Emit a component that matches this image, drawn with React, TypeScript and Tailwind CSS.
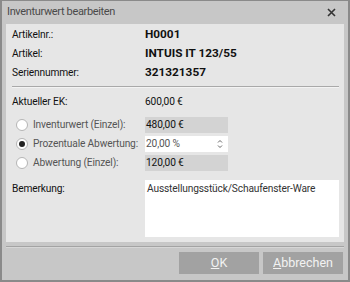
import React from "react";

const font = { fontFamily: 'Roboto, "Noto Sans", sans-serif' };

function Radio({ checked }: { checked?: boolean }) {
  return (
    <div className="w-[12px] h-[12px] shrink-0 rounded-full bg-white border border-[#b5b5b5] flex items-center justify-center">
      {checked && <div className="w-[6px] h-[6px] rounded-full bg-[#222]" />}
    </div>
  );
}

export default function App() {
  return (
    <div
      className="w-[350px] h-[282px] bg-[#c7c7c7] border-x-2 border-b-2 border-t border-[#8a8a8a] flex flex-col text-[10.2px] tracking-[-0.15px] text-[#111] overflow-hidden whitespace-nowrap"
      style={font}
    >
      <div className="h-[23px] flex items-center justify-between pl-[5px] pr-[12px] shrink-0">
        <span className="text-[11px] tracking-[-0.35px] text-[#4a4a4a]">Inventurwert bearbeiten</span>
        <svg width="9" height="9" viewBox="0 0 9 9">
          <path d="M1 1 L8 8 M8 1 L1 8" stroke="#333" strokeWidth="1.6" />
        </svg>
      </div>
      <div className="mx-[4px] bg-[#e6e6e6] h-[218px] pl-[6px] pr-[5px] pt-[1px] shrink-0">
        <div className="flex items-center h-[19px]">
          <span className="w-[133px]">Artikelnr.:</span>
          <span className="font-bold text-[11.8px] tracking-normal">H0001</span>
        </div>
        <div className="flex items-center h-[19px]">
          <span className="w-[133px]">Artikel:</span>
          <span className="font-bold text-[11.8px] tracking-normal">INTUIS IT 123/55</span>
        </div>
        <div className="flex items-center h-[19px]">
          <span className="w-[133px]">Seriennummer:</span>
          <span className="font-bold text-[11.8px] tracking-normal">321321357</span>
        </div>
        <div className="mt-[4px] h-[1px] bg-[#a9a9a9] border-b border-[#f3f3f3] box-content" />
        <div className="flex items-center h-[19px] mt-[4px]">
          <span className="w-[133px]">Aktueller EK:</span>
          <span>600,00 €</span>
        </div>
        <div className="mt-[6px] flex flex-col gap-[3px]">
          <div className="flex items-center h-[16px]">
            <div className="w-[133px] flex items-center pl-[4px] gap-[5px] text-[#555]">
              <Radio />
              <span>Inventurwert (Einzel):</span>
            </div>
            <div className="w-[83px] h-[16px] bg-[#d3d3d3] flex items-center pl-[1px]">480,00 €</div>
          </div>
          <div className="flex items-center h-[16px]">
            <div className="w-[133px] flex items-center pl-[4px] gap-[5px] text-[#555]">
              <Radio checked />
              <span>Prozentuale Abwertung:</span>
            </div>
            <div className="w-[83px] h-[16px] bg-white flex items-center justify-between pl-[1px] pr-[5px] text-[#555]">
              <span>20,00 %</span>
              <svg width="6" height="10" viewBox="0 0 6 10">
                <path d="M1 3.5 L3 1.5 L5 3.5 M1 6.5 L3 8.5 L5 6.5" stroke="#666" strokeWidth="1" fill="none" />
              </svg>
            </div>
          </div>
          <div className="flex items-center h-[16px]">
            <div className="w-[133px] flex items-center pl-[4px] gap-[5px] text-[#555]">
              <Radio />
              <span>Abwertung (Einzel):</span>
            </div>
            <div className="w-[83px] h-[16px] bg-[#d3d3d3] flex items-center pl-[1px]">120,00 €</div>
          </div>
        </div>
        <div className="flex mt-[9px]">
          <span className="w-[133px] pt-[1px]">Bemerkung:</span>
          <div className="flex-1 h-[57px] bg-white pl-[2px] pt-[1px] text-[#333]">
            Ausstellungsstück/Schaufenster-Ware
          </div>
        </div>
      </div>
      <div className="mt-[4px] mx-[4px] h-[1px] bg-[#a3a3a3] border-b border-[#d6d6d6] box-content shrink-0" />
      <div className="flex justify-end gap-[4px] pr-[5px] mt-[4px]">
        <button className="w-[80px] h-[22px] bg-[#a2a2a2] text-[#f2f2f2] text-[12.5px] tracking-normal">
          <span className="underline">O</span>K
        </button>
        <button className="w-[80px] h-[22px] bg-[#a2a2a2] text-[#f2f2f2] text-[12.5px] tracking-normal">
          <span className="underline">A</span>bbrechen
        </button>
      </div>
    </div>
  );
}
